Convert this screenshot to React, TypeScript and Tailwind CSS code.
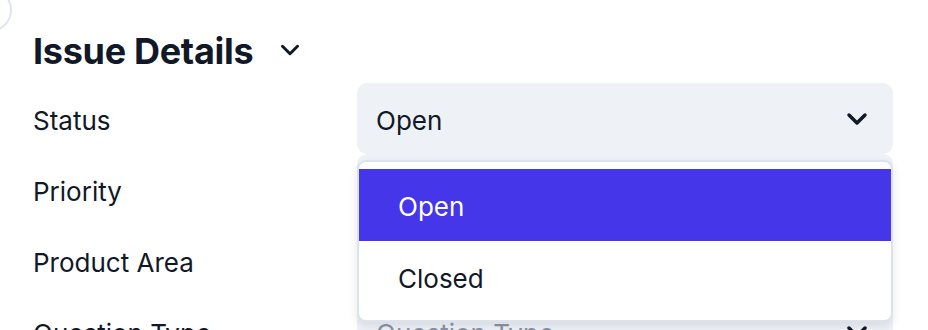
import { ChevronDown } from 'lucide-react';

const fields = [
  { label: 'Status', value: 'Open' },
  { label: 'Priority', value: '' },
  { label: 'Product Area', value: '' },
  { label: 'Question Type', value: '' },
];

const options = ['Open', 'Closed'];

export default function App() {
  return (
    <div
      className="relative w-[928px] h-[330px] overflow-hidden bg-white text-[#111827]"
      style={{ fontFamily: 'Inter, "Noto Sans", sans-serif' }}
    >
      {/* corner button, mostly off screen */}
      <div className="absolute -left-[32px] -top-[12px] w-[44px] h-[44px] rounded-full border-2 border-[#dfe5ee]"></div>

      <div className="pl-[33px] pr-[35px] pt-[28px]">
        {/* Header */}
        <div className="flex items-center h-[44px] mb-[11px]">
          <h2 className="text-[36px] font-bold leading-none tracking-[-0.3px] pt-[2px]">Issue Details</h2>
          <ChevronDown className="ml-[22px] w-[30px] h-[30px] text-[#111827]" strokeWidth={2.4} />
        </div>

        {/* Fields */}
        <div className="flex flex-col">
          {fields.map((field) => (
            <div key={field.label} className="flex items-center h-[71px]">
              <div className="w-[324px] text-[26px] pt-[3px]">{field.label}</div>
              <div className="flex-1 h-[71px] rounded-[10px] bg-[#eef1f6] flex items-center justify-between pl-[19px] pr-[20px]">
                <span className={`text-[26px] pt-[3px] ${field.value ? 'text-[#111827]' : 'text-[#8b93a3]'}`}>
                  {field.value || field.label}
                </span>
                <ChevronDown className="w-[32px] h-[32px] text-[#111827]" strokeWidth={2.6} />
              </div>
            </div>
          ))}
        </div>
      </div>

      {/* Open listbox */}
      <div className="absolute left-[357px] top-[160px] w-[536px] rounded-[9px] border-2 border-[#dde3ec] bg-white py-[7px] shadow-[0_4px_10px_rgba(15,23,42,0.10)]">
        {options.map((option, index) => (
          <div
            key={option}
            className={`h-[72px] flex items-center pl-[39px] pt-[3px] text-[26px] ${
              index === 0 ? 'bg-[#4536ea] text-white' : 'text-[#111827]'
            }`}
          >
            {option}
          </div>
        ))}
      </div>
    </div>
  );
}
